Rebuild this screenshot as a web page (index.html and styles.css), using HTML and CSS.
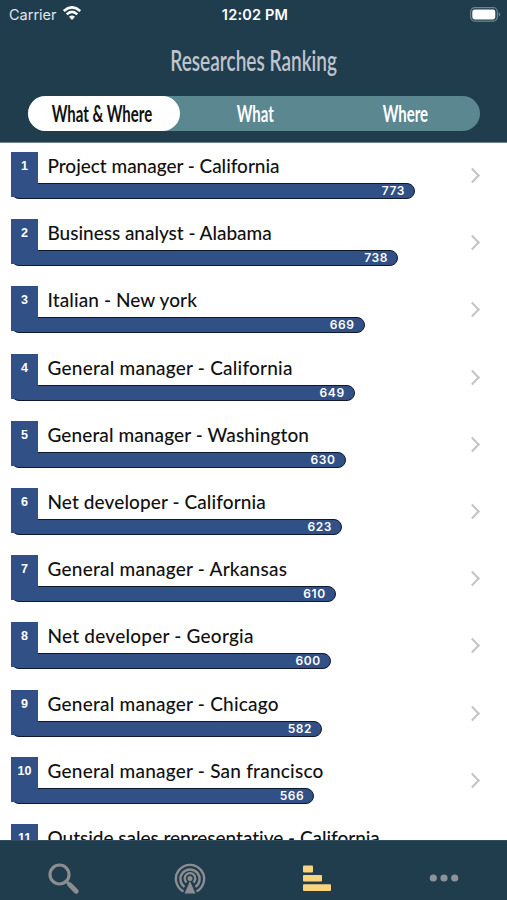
FILE: index.html
```html
<!DOCTYPE html>
<html lang="en">
<head>
    <meta charset="UTF-8">
    <title>Researches Ranking</title>
    <link rel="stylesheet" href="styles.css">
</head>
<body>

<div class="header">
    <div class="status">
        <div class="carrier">
            <span>Carrier</span>
            <svg width="18" height="14" viewBox="0 0 18 14" fill="none" stroke="#fff" stroke-width="2.6">
                <path d="M.8 5.1Q9-2.4 17.2 5.1M3.7 8.4Q9 3.5 14.3 8.4"/>
                <path d="M6 10.8Q9 8.2 12 10.8L9 13.9z" fill="#fff" stroke="none"/>
            </svg>
        </div>
        <div class="time">12:02 PM</div>
        <div class="battery">
            <svg width="31" height="15" viewBox="0 0 31 15">
                <rect x=".7" y=".7" width="26.6" height="13.4" rx="4" fill="none" stroke="#71858f" stroke-width="1.2"/>
                <rect x="2.3" y="2.4" width="23" height="10" rx="2.3" fill="#fff"/>
                <path d="M28.7 5.2q3 2.2 0 4.4z" fill="#71858f"/>
            </svg>
        </div>
    </div>
    <h1><span>Researches Ranking</span></h1>
    <div class="tabs">
        <div class="tab active"><span>What &amp; Where</span></div>
        <div class="tab"><span>What</span></div>
        <div class="tab"><span>Where</span></div>
    </div>
</div>

<!-- bar width = count * 0.486 + 28.3 -->
<ul class="list">
    <li><b class="rank">1</b><div class="info"><p class="tight">Project manager - California</p><div class="bar" style="width: 404px">773</div></div><i class="arrow"></i></li>
    <li><b class="rank">2</b><div class="info"><p class="tight">Business analyst - Alabama</p><div class="bar" style="width: 387px">738</div></div><i class="arrow"></i></li>
    <li><b class="rank">3</b><div class="info"><p>Italian - New york</p><div class="bar" style="width: 353.5px">669</div></div><i class="arrow"></i></li>
    <li><b class="rank">4</b><div class="info"><p class="wide">General manager - California</p><div class="bar" style="width: 343.7px">649</div></div><i class="arrow"></i></li>
    <li><b class="rank">5</b><div class="info"><p>General manager - Washington</p><div class="bar" style="width: 334.5px">630</div></div><i class="arrow"></i></li>
    <li><b class="rank">6</b><div class="info"><p>Net developer - California</p><div class="bar" style="width: 331px">623</div></div><i class="arrow"></i></li>
    <li><b class="rank">7</b><div class="info"><p class="wide">General manager - Arkansas</p><div class="bar" style="width: 324.8px">610</div></div><i class="arrow"></i></li>
    <li><b class="rank">8</b><div class="info"><p class="wide">Net developer - Georgia</p><div class="bar" style="width: 319.9px">600</div></div><i class="arrow"></i></li>
    <li><b class="rank">9</b><div class="info"><p class="wide">General manager - Chicago</p><div class="bar" style="width: 311.2px">582</div></div><i class="arrow"></i></li>
    <li><b class="rank">10</b><div class="info"><p class="wide">General manager - San francisco</p><div class="bar" style="width: 303.4px">566</div></div><i class="arrow"></i></li>
    <li><b class="rank">11</b><div class="info"><p class="tight">Outside sales representative - California</p></div></li>
</ul>

<div class="footer">
    <div class="item">
        <svg width="32" height="32" viewBox="0 0 32 32" fill="none" stroke="#8b8d90">
            <circle cx="12.5" cy="11.5" r="9.5" stroke-width="3.2"/>
            <path d="M19 18l3 3" stroke-width="3"/>
            <path d="M22.8 21.8l6.4 6.4" stroke-width="4.8" stroke-linecap="round"/>
        </svg>
    </div>
    <div class="item">
        <svg width="32" height="32" viewBox="0 0 32 32" fill="none" stroke="#8b8d90" stroke-width="2.4">
            <path d="M9.5 28.5A14.1 14.1 0 1 1 22.5 28.5"/>
            <path d="M10.5 23.9A9.6 9.6 0 1 1 21.5 23.9"/>
            <path d="M12.6 19.5A5.3 5.3 0 1 1 19.4 19.5"/>
            <circle cx="16" cy="15.6" r="2.5" fill="#8b8d90" stroke="none"/>
            <path d="M16 18L21.5 30.5h-11z" fill="#8b8d90" stroke="none"/>
        </svg>
    </div>
    <div class="item">
        <svg width="30" height="28" viewBox="0 0 30 28" fill="#fad47c">
            <rect x="1" y=".6" width="10" height="7" rx="1"/>
            <rect x="1" y="10" width="19" height="6.6" rx="1"/>
            <rect x="1" y="19.2" width="28" height="6.8" rx="1"/>
        </svg>
    </div>
    <div class="item">
        <svg width="30" height="28" viewBox="0 0 30 28" fill="#8e9299">
            <circle cx="4.3" cy="13" r="3.6"/>
            <circle cx="15" cy="13" r="3.6"/>
            <circle cx="25.7" cy="13" r="3.6"/>
        </svg>
    </div>
</div>

</body>
</html>
```
FILE: styles.css
```css
*{
    box-sizing: border-box;
    margin: 0;
    padding: 0;
}
body{
    height: 900px;
    display: flex;
    flex-direction: column;
    overflow: hidden;
    background: #fff;
    font-family: Lato, "Liberation Sans", sans-serif;
}

/*header*/
.header{
    height: 143px;
    flex: none;
    background: #1f3d4d;
    border-bottom: 1px solid #71858f;
}
.status{
    height: 28px;
    padding: 0 6px 0 9px;
    display: grid;
    grid-template-columns: 1fr auto 1fr;
    align-items: center;
    color: #fff;
    font: 14.5px Inter, sans-serif;
}
.carrier{
    display: flex;
    align-items: center;
    gap: 6px;
    color: #e1e6e9;
}
.carrier svg{
    margin-top: -2px;
}
.time{
    font-weight: 600;
    letter-spacing: .2px;
}
.battery{
    height: 15px;
    justify-self: end;
}
h1{
    height: 68px;
    line-height: 64px;
    text-align: center;
    font-size: 28px;
    font-weight: 600;
    color: #bfc3cc;
}
h1 span, .tab span{
    display: inline-block;
    white-space: nowrap;
    transform: scaleX(.68);
}
.tabs{
    height: 35px;
    margin: 0 27px 0 28px;
    display: flex;
    border-radius: 18px;
    background: #5b8791;
}
.tab{
    flex: 1;
    line-height: 36px;
    text-align: center;
    font-size: 22px;
    font-weight: 700;
    color: #fff;
}
.tab.active{
    flex: 0 0 150px;
    padding-right: 4px;
    border-radius: 18px;
    background: #fff;
    color: #111;
}

/*ranking*/
.list{
    flex: 1;
    min-height: 0;
    overflow: hidden;
    padding: 9px 26px 0 11px;
    list-style: none;
}
.list li{
    height: 67.2px;
    display: flex;
}
.rank{
    width: 27px;
    height: 45px;
    flex: none;
    z-index: 1;
    padding-top: 7px;
    background: #315086;
    color: #fff;
    text-align: center;
    font: bold 12.5px/15px "Liberation Sans", sans-serif;
}
.info{
    flex: 1;
    margin-left: -27px;
}
.info p{
    height: 31px;
    padding-left: 36.5px;
    line-height: 28px;
    white-space: nowrap;
    font-size: 19px;
    font-weight: 500;
    letter-spacing: .1px;
    color: #111;
}
.info .tight{
    letter-spacing: -.03px;
}
.info .wide{
    letter-spacing: .23px;
}
.bar{
    height: 16px;
    padding-right: 9px;
    border: 1.5px solid #10182c;
    border-radius: 8px;
    background: #315086;
    color: #fff;
    text-align: right;
    font: 600 12px/14px Inter, sans-serif;
    letter-spacing: .6px;
}
.arrow{
    width: 11px;
    height: 11px;
    margin: 18px 3px 0 0;
    border: solid #c3c3c5;
    border-width: 2px 2px 0 0;
    transform: scaleX(.95) rotate(45deg);
}

/*bottom menu*/
.footer{
    height: 60px;
    flex: none;
    display: flex;
    padding-top: 15px;
    background: #1f3d4d;
    border-top: 1px solid #31505f;
}
.item{
    flex: 1;
    height: 45px;
    display: flex;
    align-items: center;
    justify-content: center;
}
```
